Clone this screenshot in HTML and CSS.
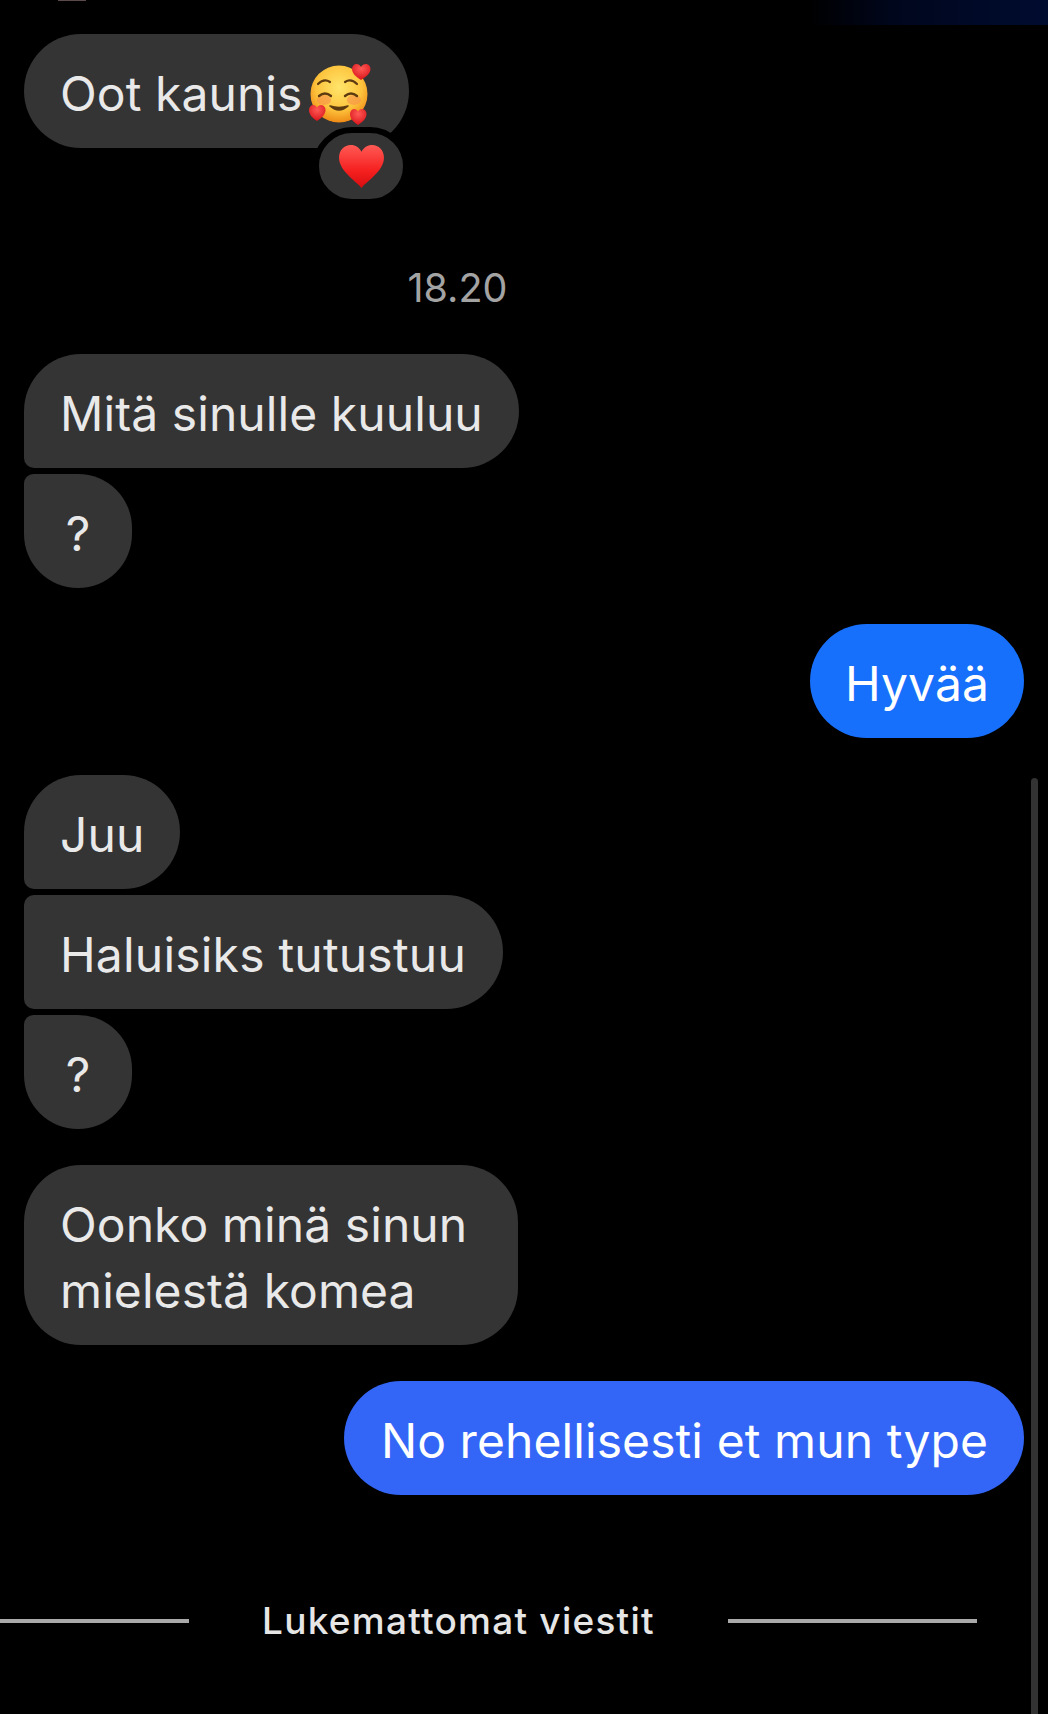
FILE: index.html
```
<!DOCTYPE html>
<html lang="fi">
<head>
<meta charset="utf-8">
<title>Viestit</title>
<link rel="stylesheet" href="styles.css">
</head>
<body>
<div class="top-sliver"></div>
<div class="top-glow"></div>
<main class="chat">
  <div class="bubble in first-bubble">
    <span>Oot kaunis</span><svg class="emoji-face" viewBox="0 0 62 62" aria-hidden="true">
      <defs>
        <radialGradient id="faceFill" cx="50%" cy="38%" r="62%">
          <stop offset="0" stop-color="#ffe56b"/>
          <stop offset="0.65" stop-color="#fdc33c"/>
          <stop offset="1" stop-color="#ee8a16"/>
        </radialGradient>
        <radialGradient id="miniHeart" cx="50%" cy="30%" r="75%">
          <stop offset="0" stop-color="#ff5a55"/>
          <stop offset="1" stop-color="#d60f16"/>
        </radialGradient>
      </defs>
      <circle cx="30" cy="31" r="28.5" fill="url(#faceFill)"/>
      <ellipse cx="15" cy="37" rx="7" ry="5" fill="#f58a4a" opacity=".55"/>
      <ellipse cx="45" cy="37" rx="7" ry="5" fill="#f58a4a" opacity=".55"/>
      <path d="M9 21q6-6 12-2M36 19q6-4 12 2" fill="none" stroke="#5d3a0f" stroke-width="2.2" stroke-linecap="round"/>
      <path d="M10 33q6-5 12 0M36 33q6-5 12 0" fill="none" stroke="#5d3a0f" stroke-width="2.4" stroke-linecap="round"/>
      <path d="M21 43q9 8 18 0q-9 3-18 0z" fill="#5d3a0f" stroke="#5d3a0f" stroke-width="1.6" stroke-linejoin="round"/>
      <path d="M52 17c-5-3-9-7-9-11c0-3 2-5 4.500-5c2 0 3.500 1 4.500 3c1-2 2.800-3 4.800-3c2.700 0 4.700 2.200 4.700 5c0 4-4.500 8-9.500 11z" fill="url(#miniHeart)"/>
      <path d="M8 58c-5-3-8-7-8-11c0-3 2-5 4.300-5c1.700 0 3 1 3.700 2.500c.8-1.500 2.200-2.500 4-2.500c2.500 0 4.500 2.200 4.500 5c0 4-3.500 8-8.500 11z" fill="url(#miniHeart)"/>
      <path d="M49 62c-5-3-8-7-8-11c0-3 2-5 4.300-5c1.700 0 3 1 3.700 2.500c.8-1.500 2.200-2.500 4-2.500c2.500 0 4.500 2.200 4.500 5c0 4-3.500 8-8.500 11z" fill="url(#miniHeart)"/>
    </svg>
    <div class="reaction">
      <svg class="reaction-heart" viewBox="0 0 46 44" aria-hidden="true">
        <defs>
          <linearGradient id="bigHeart" x1="0" y1="0" x2="0" y2="1">
            <stop offset="0" stop-color="#ff5a55"/>
            <stop offset="0.6" stop-color="#f5201f"/>
            <stop offset="1" stop-color="#d80d10"/>
          </linearGradient>
        </defs>
        <path d="M23 44C19 38 0 27 0 13C0 5 5.500 0 12 0c4.800 0 8.800 2.500 11 7c2.200-4.500 6.200-7 11-7c6.500 0 12 5 12 13C46 27 27 38 23 44z" fill="url(#bigHeart)"/>
      </svg>
    </div>
  </div>

  <p class="timestamp">18.20</p>

  <div class="bubble in tail-bottom">Mitä sinulle kuuluu</div>
  <div class="bubble in tail-top stacked short">?</div>

  <div class="bubble out out-a group">Hyvää</div>

  <div class="bubble in tail-bottom group after-out">Juu</div>
  <div class="bubble in tail-top tail-bottom stacked roomy">Haluisiks tutustuu</div>
  <div class="bubble in tail-top stacked short">?</div>

  <div class="bubble in group wide">Oonko minä sinun<br>mielestä komea</div>

  <div class="bubble out out-b group">No rehellisesti et mun type</div>

  <div class="divider">
    <span class="rule rule-left"></span>
    <span class="divider-label">Lukemattomat viestit</span>
    <span class="rule rule-right"></span>
  </div>
</main>
<div class="scrollbar"></div>
</body>
</html>
```
FILE: styles.css
```
* { box-sizing: border-box; }
html, body { margin: 0; padding: 0; background: #000; }
body {
  width: 1048px;
  height: 1714px;
  overflow: hidden;
  position: relative;
  font-family: Inter, "Liberation Sans", sans-serif;
}
.chat {
  display: flex;
  flex-direction: column;
  align-items: flex-start;
  padding: 34px 24px 0;
}
.bubble {
  position: relative;
  padding: 27px 36px 21px 36px;
  font-size: 48px;
  line-height: 66px;
  letter-spacing: 0.08px;
  border-radius: 57px;
  white-space: nowrap;
}
.in { background: #343434; color: #e9e9e9; }
.out { align-self: flex-end; color: #fff; padding-left: 37px; }
.out-a {
  width: 214px;
  padding-left: 0;
  padding-right: 0;
  text-align: center;
  background: #1770fc;
}
.out-b { background: #3366f6; }
.tail-bottom { border-bottom-left-radius: 10px; }
.tail-top { border-top-left-radius: 10px; }
.stacked { margin-top: 6px; }
.group { margin-top: 36px; }
.after-out { margin-top: 37px; }
.short {
  width: 108px;
  padding-left: 0;
  padding-right: 0;
  text-align: center;
}
.wide { width: 494px; }
.roomy { width: 479px; letter-spacing: 0.2px; }
.first-bubble {
  display: flex;
  align-items: center;
  padding-right: 38px;
}
.emoji-face {
  width: 62px;
  height: 62px;
  margin-left: 6px;
  flex: none;
}
.reaction {
  position: absolute;
  left: 295px;
  top: 99px;
  width: 84px;
  height: 66px;
  box-sizing: content-box;
  border: 6px solid #000;
  border-radius: 40px;
  background: #343434;
  display: flex;
  align-items: center;
  justify-content: center;
  margin: -6px;
}
.reaction-heart { width: 45px; height: 43px; }
.timestamp {
  width: 867px;
  margin: 118px 0 44px;
  text-align: center;
  font-size: 39.5px;
  line-height: 44px;
  color: #a3a3a3;
}
.divider {
  display: flex;
  align-items: center;
  margin: 103px 0 0 -24px;
  height: 46px;
}
.rule { height: 4px; background: #a9a9a9; display: block; }
.rule-left { width: 189px; }
.rule-right { width: 249px; }
.divider-label {
  margin: 0 73px;
  font-size: 37px;
  font-weight: 500;
  letter-spacing: 1.25px;
  line-height: 46px;
  color: #e6e6e6;
  white-space: nowrap;
}
.scrollbar {
  position: absolute;
  right: 10px;
  top: 778px;
  bottom: 0;
  width: 7px;
  background: #333;
  border-radius: 4px 4px 0 0;
}
.top-glow {
  position: absolute;
  top: 0;
  right: 0;
  width: 240px;
  height: 25px;
  background: linear-gradient(90deg, #000 0%, #00061c 35%, #000c30 100%);
}
.top-sliver {
  position: absolute;
  top: 0;
  left: 58px;
  width: 28px;
  height: 1px;
  background: #5b4a4a;
}
```
